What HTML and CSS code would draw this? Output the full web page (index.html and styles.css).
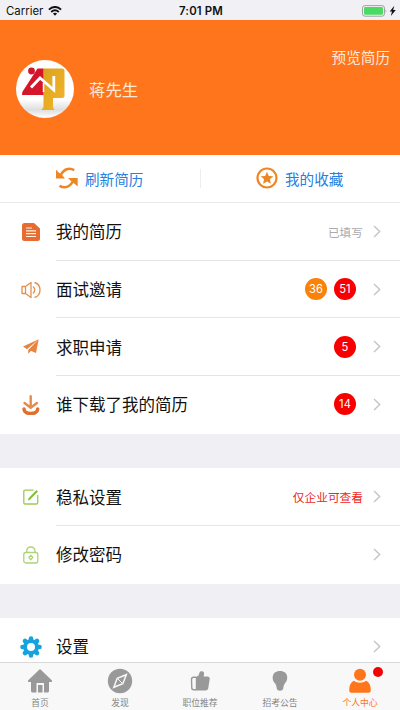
FILE: index.html
```html
<!DOCTYPE html>
<html lang="zh-CN">
<head>
<meta charset="utf-8">
<meta name="viewport" content="width=device-width, initial-scale=1">
<title>个人中心</title>
<link rel="stylesheet" href="styles.css">
</head>
<body>
<div class="app">
  <header class="status">
    <div class="status-left"><span>Carrier</span>
      <svg width="14" height="10" viewBox="0 0 14 10" fill="none" stroke="#111" stroke-width="1.9"><path d="M.9 3.6Q7-1.7 13.1 3.6M3.2 6Q7 2.7 10.8 6"/><path d="M7 9.8 4.9 7.6Q7 5.9 9.1 7.6Z" fill="#111" stroke="none"/></svg>
    </div>
    <div class="status-time">7:01 PM</div>
    <div class="status-right">
      <svg width="34" height="12" viewBox="0 0 34 12"><rect x=".5" y=".6" width="22" height="10.6" rx="2.5" fill="#f4f4f6" stroke="#8c8c90" stroke-width=".8"/><rect x="2" y="2" width="19" height="7.8" rx="1.2" fill="#4cd964"/><path d="M23.7 4.2q1.5 1.7 0 3.4z" fill="#8c8c90"/><path d="M32.300.8 27.700 6.500h2.300L28.800 11l5-6.100h-2.600z" fill="#111"/></svg>
    </div>
  </header>

  <section class="profile">
    <svg class="avatar" width="58" height="58" viewBox="0 0 58 58">
      <defs>
        <linearGradient id="shade" x2="0" y2="1"><stop offset=".68" stop-color="#fff"/><stop offset=".86" stop-color="#dedede"/><stop offset="1" stop-color="#fff"/></linearGradient>
        <linearGradient id="gold" x2="1" y2="1"><stop stop-color="#d9a21c"/><stop offset="1" stop-color="#f5b52c"/></linearGradient>
      </defs>
      <circle cx="29" cy="29" r="29" fill="url(#shade)"/>
      <path d="M27.500 8.500h18.500q2.500 0 2.500 2.500v24.500q0 2.500-2.500 2.500H37v9l1.500 3H25.500l2-3z" fill="url(#gold)"/>
      <circle cx="15.500" cy="11" r="3.400" fill="#d5152a"/>
      <path d="M21.500 8.500h6V35H6l.3-3z" fill="#d5152a"/>
      <path d="M15 27.500 24 18l13.800 12V16" fill="none" stroke="#fff" stroke-width="2.800"/>
      <path d="M27.500 23v9" stroke="#fff" stroke-width="1.500"/>
    </svg>
    <h1 class="name">蒋先生</h1>
    <a class="preview">预览简历</a>
  </section>

  <nav class="actions">
    <a class="action">
      <svg width="22" height="22" viewBox="0 0 22 22" fill="none" stroke="#ee8723" stroke-width="2.600"><path d="M18.200 3.200C13 .2 8 2 5 7.500M3.500 18.800C9 21.800 13.800 20 16.800 14.500"/><path d="M0 2.800 3 5.700 6 7.800 9 11.500H0zM21.700 19.600 18.500 16.700 15.500 14.600 12 11h9.700z" fill="#ee8723" stroke="none"/></svg>
      <span>刷新简历</span>
    </a>
    <a class="action">
      <svg width="22" height="22" viewBox="0 0 22 22"><circle cx="11" cy="11" r="9.500" fill="none" stroke="#ee8723" stroke-width="2.200"/><path d="m11 4.700 1.800 4.200 4.500.4-3.400 3 1 4.400L11 14.400l-3.900 2.300 1-4.400-3.400-3 4.500-.4z" fill="#ee8723"/></svg>
      <span>我的收藏</span>
    </a>
  </nav>

  <main>
    <ul class="group">
      <li class="row">
        <div class="icon"><svg width="18" height="18" viewBox="0 0 18 18"><path d="M2.500 0H12l6 5.500v10q0 2.500-2.500 2.500h-13Q0 18 0 15.500v-13Q0 0 2.500 0z" fill="#e66d32"/><path d="M4 5h6M4 7.800h10M4 10.600h10M4 13.500h10" stroke="#fff0df" stroke-width="1.200"/></svg></div>
        <div class="body"><span class="label">我的简历</span><span class="note">已填写</span><svg class="chevron" viewBox="0 0 8 13"><path d="m1 1 5.700 5.500L1 12"/></svg></div>
      </li>
      <li class="row">
        <div class="icon"><svg width="20" height="18" viewBox="0 0 20 18" fill="none" stroke="#e3914f" stroke-width="1.300" stroke-linejoin="round"><path d="M1 5.500h3.500v7H1zM4.500 5.500 10 1.500v15l-5.500-4M12 5.500q3.500 3.500 0 7M13.500 1.500q5.500 1.500 5.500 7.500t-5.500 7.500"/></svg></div>
        <div class="body"><span class="label">面试邀请</span><span class="badge badge-orange">36</span><span class="badge">51</span><svg class="chevron" viewBox="0 0 8 13"><path d="m1 1 5.700 5.500L1 12"/></svg></div>
      </li>
      <li class="row">
        <div class="icon"><svg width="16" height="16" viewBox="0 0 16 16" fill="#e68540"><path d="M15.700.2 0 7.600l4 2.600zM15.700.2 5.200 11v3.800l2.200-2.400zM15.700.2 7 11.400l6 2.700z"/></svg></div>
        <div class="body"><span class="label">求职申请</span><span class="badge">5</span><svg class="chevron" viewBox="0 0 8 13"><path d="m1 1 5.700 5.500L1 12"/></svg></div>
      </li>
      <li class="row">
        <div class="icon"><svg width="18" height="20" viewBox="0 0 18 20" fill="none" stroke-linecap="round" stroke-linejoin="round"><path d="M8.700 1.300V12.500M2.500 8 8.700 12.800l6.200-4.800" stroke="#e98b48" stroke-width="2.400"/><path d="M2 14c0 6 13.700 6 13.700 0" stroke="#df702e" stroke-width="3.500"/></svg></div>
        <div class="body"><span class="label">谁下载了我的简历</span><span class="badge">14</span><svg class="chevron" viewBox="0 0 8 13"><path d="m1 1 5.700 5.500L1 12"/></svg></div>
      </li>
    </ul>
    <ul class="group">
      <li class="row">
        <div class="icon"><svg width="16" height="16" viewBox="0 0 16 16" fill="none" stroke="#9fca55"><path d="M10.500 1.200H2Q.8 1.200.8 2.400v11.400Q.8 15 2 15h11.500q1.200 0 1.200-1.200V6" stroke-width="1.300"/><path d="M6 10.300 14.200 1.800" stroke="#83bd35" stroke-width="2"/><path d="m5 11.400.5-2 1.500 1.500z" fill="#83bd35" stroke="none"/></svg></div>
        <div class="body"><span class="label">稳私设置</span><span class="note note-red">仅企业可查看</span><svg class="chevron" viewBox="0 0 8 13"><path d="m1 1 5.700 5.500L1 12"/></svg></div>
      </li>
      <li class="row">
        <div class="icon"><svg width="16" height="18" viewBox="0 0 16 18" fill="none" stroke="#afd27a" stroke-width="1.300"><rect x=".8" y="6.500" width="14" height="10.500" rx="2"/><path d="M3.700 6.500V5Q4 1 7.800 1T12 5v1.500"/><path d="m7.800 9.300 2 2-2 2.400-2-2.400z"/></svg></div>
        <div class="body"><span class="label">修改密码</span><svg class="chevron" viewBox="0 0 8 13"><path d="m1 1 5.700 5.500L1 12"/></svg></div>
      </li>
    </ul>
    <ul class="group">
      <li class="row">
        <div class="icon"><svg width="22" height="22" viewBox="0 0 22 22"><g stroke="#15a3df" stroke-width="4.600" stroke-linecap="round"><path d="M11 2.500v17M2.500 11h17M5 5l12 12M17 5 5 17"/></g><circle cx="11" cy="11" r="7.800" fill="#15a3df"/><circle cx="11" cy="11" r="4" fill="#fff"/></svg></div>
        <div class="body"><span class="label">设置</span><svg class="chevron" viewBox="0 0 8 13"><path d="m1 1 5.700 5.500L1 12"/></svg></div>
      </li>
    </ul>
  </main>

  <nav class="tabs">
    <a class="tab"><svg width="26" height="26" viewBox="0 0 26 26"><path d="m13 1 12 11.500q.5 1.500-1 1.500h-2v9q0 1.500-1.500 1.500H17V15H9.500v9.500H5.500Q4 24.500 4 23v-9H2q-1.500 0-1-1.500z" fill="#999"/><path d="M11 17h4.500v7.500H11z" fill="#999"/></svg><span>首页</span></a>
    <a class="tab"><svg width="26" height="26" viewBox="0 0 26 26"><circle cx="13" cy="13" r="12.200" fill="#999"/><path d="m19.300 6.700-3.500 9-9 3.600 3.400-9z" fill="none" stroke="#f8f8f8" stroke-width="1.500"/><path d="M10.500 10.500 15.500 15.500" stroke="#f8f8f8"/></svg><span>发现</span></a>
    <a class="tab"><svg width="26" height="26" viewBox="0 0 26 26"><path d="M8.800 9 11.500 7.500 12.500 4.500Q13 3 15 3.200q2.500.3 2 3L16.700 8.500H20.500q2.500 0 2.200 2.500l-1.500 9.500Q20.800 22.500 18.500 22.500H8.800z" fill="#999"/><path d="M9 9.300H6.500Q4.500 9.300 4.500 11.500l.3 8.500q0 1.800 2 1.800H9" fill="none" stroke="#999" stroke-width="1.400"/></svg><span>职位推荐</span></a>
    <a class="tab"><svg width="26" height="26" viewBox="0 0 26 26"><path d="M13 3c9 0 8.500 9.500 4.800 12.500q-1.300 1.500-1.500 4.500-.2 2.800-3.300 2.800T9.700 20q-.2-3-1.500-4.500C4.500 12.500 4 3 13 3z" fill="#999"/></svg><span>招考公告</span></a>
    <a class="tab tab-active"><svg width="26" height="26" viewBox="0 0 26 26" fill="#ff7519"><circle cx="13" cy="6.700" r="6"/><path d="M6.500 12.800Q13 16.500 19.500 12.800 24 15.500 23.700 23q0 1.800-2 1.800H4.300q-2 0-2-1.800Q2 15.500 6.500 12.800z"/></svg><span>个人中心</span><i class="dot"></i></a>
  </nav>
</div>
</body>
</html>
```
FILE: styles.css
```css
* {
  box-sizing: border-box;
}

body {
  margin: 0;
  font-family: Inter, "Noto Sans CJK SC", sans-serif;
  color: #111;
}

svg {
  display: block;
  flex: none;
}

.app {
  display: flex;
  flex-direction: column;
  width: 400px;
  height: 710px;
  overflow: hidden;
  background: #efeff4;
}

.status {
  display: grid;
  grid-template-columns: 1fr auto 1fr;
  align-items: center;
  flex: none;
  height: 20px;
  padding: 1px 4px 0 6px;
  font-size: 11.400px;
  background: #f0f0f5;
}

.status-left {
  display: flex;
  align-items: center;
  gap: 5px;
}

.status-time {
  font-weight: 600;
  letter-spacing: .15px;
}

.status-right {
  display: flex;
  justify-content: flex-end;
}

.profile {
  position: relative;
  display: flex;
  align-items: center;
  flex: none;
  gap: 15.500px;
  height: 134.500px;
  padding: 4px 0 0 15.500px;
  color: #ffe9d9;
  background: #ff751c;
}

.name {
  margin: 0;
  font-size: 16.400px;
  font-weight: 400;
}

.preview {
  position: absolute;
  top: 28px;
  right: 10px;
  font-size: 14.600px;
  line-height: 20px;
}

.actions {
  display: flex;
  flex: none;
  height: 48.500px;
  border-bottom: 1px solid #e9e9eb;
  background: #fff;
}

.action {
  display: flex;
  align-items: center;
  flex: 1;
  gap: 7.500px;
  padding-left: 55.500px;
  font-size: 14.600px;
  color: #2381e0;
}

.action + .action {
  background: linear-gradient(#eee, #eee) left center / 1px 19px no-repeat;
}

main {
  display: flex;
  flex-direction: column;
  flex: 1;
  gap: 34.500px;
  min-height: 0;
  overflow: hidden;
}

.group {
  flex: none;
  margin: 0;
  padding: 0;
  list-style: none;
  background: #fff;
}

.row {
  display: flex;
  height: 57.700px;
}

.icon {
  display: flex;
  align-items: center;
  justify-content: center;
  width: 56px;
  padding-left: 5px;
}

.body {
  display: flex;
  align-items: center;
  flex: 1;
  padding-right: 19px;
  border-bottom: 1px solid #e5e5e8;
}

.row:last-child .body {
  border-bottom-color: transparent;
}

.label {
  flex: 1;
  font-size: 16.500px;
}

.note {
  font-size: 11.700px;
  color: #aaa;
}

.note-red {
  color: #ee2626;
}

.badge {
  width: 22px;
  margin: 0 7px 0 7px;
  border-radius: 50%;
  font-size: 11.200px;
  line-height: 22px;
  text-align: center;
  color: #fff;
  background: #f90000;
}

.badge-orange {
  margin-right: 0;
  background: #fa8208;
}

.chevron {
  width: 8px;
  height: 13px;
  margin-left: 10px;
  fill: none;
  stroke: #c4c4c8;
  stroke-width: 1.400;
}

.tabs {
  display: flex;
  flex: none;
  height: 48px;
  border-top: 1px solid #d9d9dc;
  background: #f8f8f8;
}

.tab {
  position: relative;
  display: flex;
  flex-direction: column;
  align-items: center;
  flex: 1;
  padding-top: 5px;
  font-size: 8.800px;
  line-height: 13px;
  color: #858585;
}

.tab span {
  margin-top: 2px;
}

.tab-active {
  color: #ff7519;
}

.dot {
  position: absolute;
  top: 4px;
  right: 17.500px;
  width: 10px;
  height: 10px;
  border-radius: 50%;
  background: #f00505;
}
```
